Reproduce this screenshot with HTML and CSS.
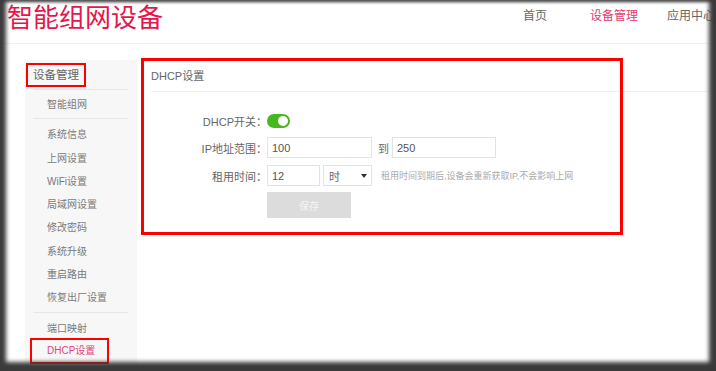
FILE: index.html
```html
<!DOCTYPE html>
<html lang="zh-CN">
<head>
    <meta charset="UTF-8">
    <meta name="viewport" content="width=device-width, initial-scale=1.0">
    <title>智能组网设备</title>
    <link rel="stylesheet" href="styles.css">
</head>
<body>
    <div class="screen">
        <header class="topbar">
            <div class="brand">智能组网设备</div>
            <nav class="nav">
                <a class="nav-home">首页</a>
                <a class="nav-device active">设备管理</a>
                <a>应用中心</a>
            </nav>
        </header>

        <div class="layout">
            <!-- left menu -->
            <aside class="side">
                <div class="side-head">设备管理</div>
                <div class="side-group">
                    <div class="side-item">智能组网</div>
                </div>
                <div class="side-group">
                    <div class="side-item">系统信息</div>
                    <div class="side-item">上网设置</div>
                    <div class="side-item">WiFi设置</div>
                    <div class="side-item">局域网设置</div>
                    <div class="side-item">修改密码</div>
                    <div class="side-item">系统升级</div>
                    <div class="side-item">重启路由</div>
                    <div class="side-item">恢复出厂设置</div>
                </div>
                <div class="side-group">
                    <div class="side-item">端口映射</div>
                    <div class="side-item active">DHCP设置</div>
                </div>
            </aside>

            <!-- DHCP panel -->
            <main class="main">
                <div class="mark"></div>
                <div class="main-head">DHCP设置</div>
                <div class="form">
                    <div class="row row-switch">
                        <label>DHCP开关：</label>
                        <span class="switch on"></span>
                    </div>
                    <div class="row row-range">
                        <label>IP地址范围：</label>
                        <input class="field field-ip" type="text" value="100">
                        <span class="to">到</span>
                        <input class="field field-ip2" type="text" value="250">
                    </div>
                    <div class="row row-lease">
                        <label>租用时间：</label>
                        <input class="field field-time" type="text" value="12">
                        <div class="select">
                            <span>时</span>
                            <i class="caret"></i>
                        </div>
                        <span class="hint">租用时间到期后,设备会重新获取IP,不会影响上网</span>
                    </div>
                    <div class="row row-save">
                        <label></label>
                        <button class="btn-save" disabled>保存</button>
                    </div>
                </div>
            </main>
        </div>
    </div>
</body>
</html>
```

FILE: styles.css
```css
html, body {
    margin: 0;
    padding: 0;
}
body {
    width: 716px;
    height: 371px;
    overflow: hidden;
    font-family: "Liberation Sans", "Noto Sans CJK SC", sans-serif;
    background-color: #3d3d3d;
}
.screen {
    position: relative;
    height: 371px;
    background: #fff;
    overflow: hidden;
}
/* dark frame of the captured window */
.screen::after {
    content: "";
    position: absolute;
    top: 0;
    left: 0;
    right: 0;
    bottom: 0;
    pointer-events: none;
    box-shadow:
        inset 6px 0 4px #3b3b3b,
        inset -7px 0 4px #3b3b3b,
        inset 0 -9px 4px #3b3b3b,
        inset 0 2px 3px #8a8a8a;
}

/* top bar */
.topbar {
    display: flex;
    align-items: flex-start;
    height: 43px;
    border-bottom: 1px solid #f1f1f1;
}
.brand {
    margin-left: 7px;
    font-family: "Noto Sans CJK SC", sans-serif;
    font-size: 26px;
    line-height: 31px;
    color: #e5154d;
}
.nav {
    display: flex;
    margin-left: auto;
    margin-right: 1px;
    padding-top: 7px;
    font-family: "Noto Sans CJK SC", sans-serif;
    font-size: 12px;
    line-height: 16px;
    color: #666;
}
.nav-home {
    margin-right: 43px;
}
.nav-device {
    margin-right: 29px;
}
.nav .active {
    color: #e23a6c;
}

/* layout */
.layout {
    display: flex;
    align-items: flex-start;
}

/* side menu */
.side {
    width: 112px;
    min-height: 320px;
    margin: 16px 0 0 25px;
    padding-top: 3px;
    background-color: #f7f7f7;
    font-size: 10px;
    color: #7a7a7a;
}
.side-head {
    box-sizing: border-box;
    width: 60px;
    height: 24px;
    margin-left: 1px;
    padding-left: 5px;
    border: 2px solid #f00;
    font-size: 11.5px;
    line-height: 20px;
    color: #666;
}
.side-group {
    margin: 2px 9px 0 8px;
    padding: 3px 0 2px;
    border-top: 1px solid #e6e6e6;
}
.side-group + .side-group {
    margin-top: 0;
    padding-top: 4px;
}
.side-item {
    padding-left: 14px;
    line-height: 23.3px;
}
.side-item.active {
    box-sizing: border-box;
    width: 79px;
    margin: -2px 0 -1px -3px;
    padding-left: 15px;
    border: 2px solid #f00;
    line-height: 22px;
    color: #e0457a;
}

/* main panel */
.main {
    position: relative;
    flex: 1;
    margin: 16px 0 0 14px;
}
.mark {
    position: absolute;
    top: -2px;
    left: -10px;
    box-sizing: border-box;
    width: 482px;
    height: 177px;
    border: 3px solid #f00;
    pointer-events: none;
}
.main-head {
    padding-top: 2px;
    line-height: 29px;
    border-bottom: 1px solid #eee;
    font-size: 11px;
    color: #666;
}
.form {
    padding-top: 19px;
    font-size: 11px;
    color: #666;
}
.row {
    display: flex;
    align-items: center;
}
.row label {
    width: 116px;
    text-align: right;
    flex-shrink: 0;
}
.row-switch {
    height: 20px;
    margin-bottom: 6px;
}
.row-range {
    height: 21px;
    margin-bottom: 7px;
}
.row-lease {
    height: 21px;
    margin-bottom: 6px;
}
.switch {
    position: relative;
    width: 23px;
    height: 14px;
    border-radius: 7px;
    background-color: #ccc;
}
.switch.on {
    background-color: #45b81f;
}
.switch::after {
    content: "";
    position: absolute;
    top: 2px;
    left: 2px;
    width: 10px;
    height: 10px;
    border-radius: 50%;
    background: #fff;
}
.switch.on::after {
    left: auto;
    right: 2px;
}
.field {
    box-sizing: border-box;
    height: 21px;
    margin: 0;
    padding: 0 4px;
    border: 1px solid #e3e3e3;
    border-radius: 0;
    font-family: "Liberation Sans", "Noto Sans CJK SC", sans-serif;
    font-size: 11px;
    color: #555;
    outline: none;
}
.field-ip {
    width: 105px;
}
.field-ip2 {
    width: 104px;
}
.field-time {
    width: 53px;
}
.to {
    margin: 0 3px 0 6px;
}
.select {
    box-sizing: border-box;
    display: flex;
    align-items: center;
    justify-content: space-between;
    width: 49px;
    height: 21px;
    margin-left: 3px;
    padding: 0 4px 0 5px;
    border: 1px solid #e3e3e3;
}
.caret {
    width: 0;
    height: 0;
    border-left: 3px solid transparent;
    border-right: 3px solid transparent;
    border-top: 4px solid #333;
}
.hint {
    margin-left: 9px;
    font-size: 9px;
    color: #aaa;
    white-space: nowrap;
}
.btn-save {
    width: 84px;
    height: 26px;
    padding: 0;
    border: none;
    background-color: #dcdcdc;
    font-family: "Liberation Sans", "Noto Sans CJK SC", sans-serif;
    font-size: 10px;
    color: #f5f5f5;
}
```
